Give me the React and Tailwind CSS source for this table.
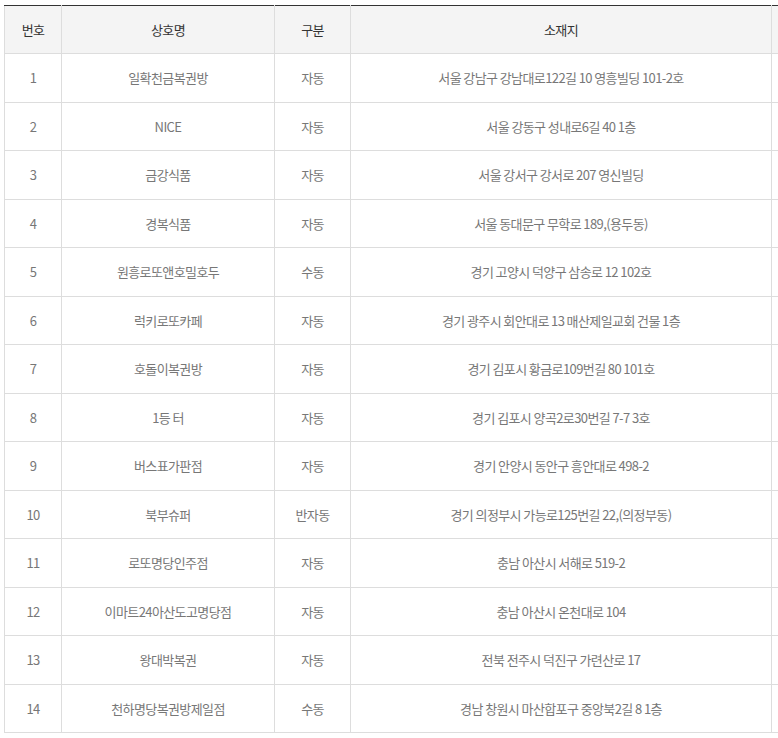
const rows = [
  ["1", "일확천금복권방", "자동", "서울 강남구 강남대로122길 10 영흥빌딩 101-2호"],
  ["2", "NICE", "자동", "서울 강동구 성내로6길 40 1층"],
  ["3", "금강식품", "자동", "서울 강서구 강서로 207 영신빌딩"],
  ["4", "경복식품", "자동", "서울 동대문구 무학로 189,(용두동)"],
  ["5", "원흥로또앤호밀호두", "수동", "경기 고양시 덕양구 삼송로 12 102호"],
  ["6", "럭키로또카페", "자동", "경기 광주시 회안대로 13 매산제일교회 건물 1층"],
  ["7", "호돌이복권방", "자동", "경기 김포시 황금로109번길 80 101호"],
  ["8", "1등 터", "자동", "경기 김포시 양곡2로30번길 7-7 3호"],
  ["9", "버스표가판점", "자동", "경기 안양시 동안구 흥안대로 498-2"],
  ["10", "북부슈퍼", "반자동", "경기 의정부시 가능로125번길 22,(의정부동)"],
  ["11", "로또명당인주점", "자동", "충남 아산시 서해로 519-2"],
  ["12", "이마트24아산도고명당점", "자동", "충남 아산시 온천대로 104"],
  ["13", "왕대박복권", "자동", "전북 전주시 덕진구 가련산로 17"],
  ["14", "천하명당복권방제일점", "수동", "경남 창원시 마산합포구 중앙북2길 8 1층"],
];

const cell = "border border-[#dddddd] py-[14px] px-1 text-center font-normal leading-[19px]";

export default function App() {
  return (
    <div className="w-[778px] h-[738px] overflow-hidden bg-white pl-[4px] pt-[5px] font-['Noto_Sans_CJK_KR','Noto_Sans',sans-serif] text-[13px] tracking-[-0.6px]">
      <table className="table-fixed border-collapse w-[840px] border-t border-t-[#333333]">
        <colgroup>
          <col className="w-[57px]" />
          <col className="w-[213px]" />
          <col className="w-[76px]" />
          <col className="w-[421px]" />
          <col className="w-[73px]" />
        </colgroup>
        <thead>
          <tr className="bg-[#f4f4f4] text-[#333333] h-[48px]">
            <th className={cell + " border-t-[#333333]"}>번호</th>
            <th className={cell + " border-t-[#333333]"}>상호명</th>
            <th className={cell + " border-t-[#333333]"}>구분</th>
            <th className={cell + " border-t-[#333333]"}>소재지</th>
            <th className={cell + " border-t-[#333333]"}></th>
          </tr>
        </thead>
        <tbody className="text-[#777777]">
          {rows.map((r) => (
            <tr key={r[0]} className="h-[48.5px]">
              <td className={cell}>{r[0]}</td>
              <td className={cell}>{r[1]}</td>
              <td className={cell}>{r[2]}</td>
              <td className={cell}>{r[3]}</td>
              <td className={cell}></td>
            </tr>
          ))}
        </tbody>
      </table>
    </div>
  );
}
